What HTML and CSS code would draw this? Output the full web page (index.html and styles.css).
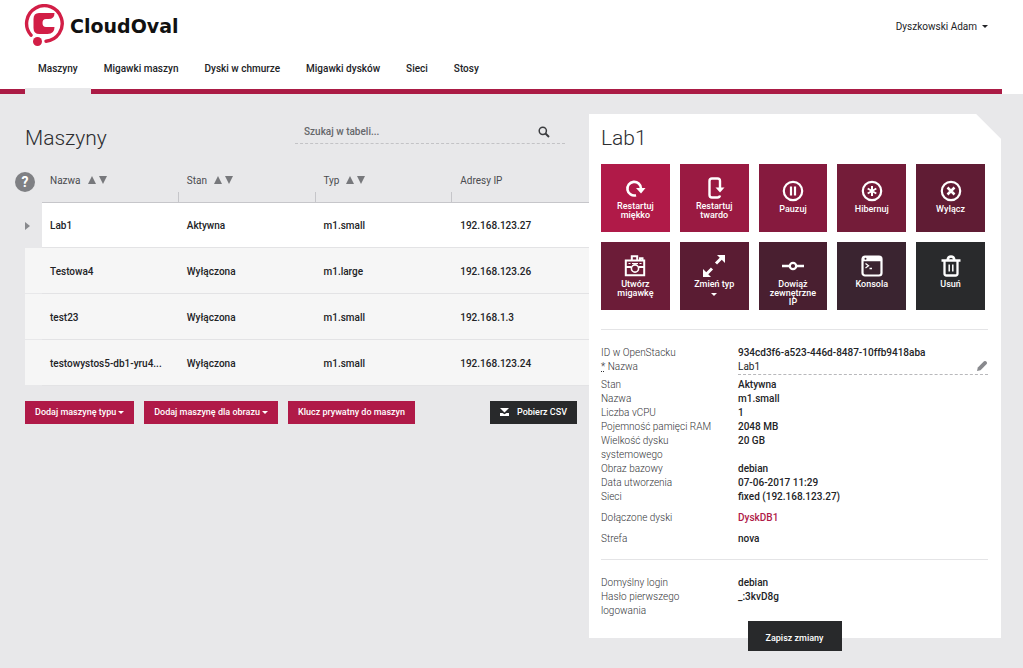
FILE: index.html
```html
<!DOCTYPE html>
<html lang="pl">
<head>
<meta charset="utf-8">
<meta name="viewport" content="width=device-width, initial-scale=1">
<title>CloudOval – Maszyny</title>
<link rel="stylesheet" href="styles.css">
</head>
<body>
<header class="site-header">
  <div class="top">
    <a class="brand" href="#">
      <svg class="brand-mark" viewBox="0 0 40 43" aria-hidden="true">
        <path d="M7 31.200A17.800 17.800 0 1 1 22 37.200" fill="none" stroke="#d21e46" stroke-width="3.400" stroke-linecap="round"/>
        <path d="M15 9H30.500q0 6-6 6H22q-3.500 0-3.500 4t3.500 4h8.500q0 7-7 7H15.500q-6 0-6-6V15q0-6 5.500-6z" fill="#d21e46"/>
        <circle cx="13.500" cy="37.500" r="4.500" fill="#d21e46"/>
      </svg>
      <span>CloudOval</span>
    </a>
    <button class="user" type="button">Dyszkowski Adam <i class="caret"></i></button>
  </div>
  <nav class="nav">
    <a class="active" href="#">Maszyny</a>
    <a href="#">Migawki maszyn</a>
    <a href="#">Dyski w chmurze</a>
    <a href="#">Migawki dysków</a>
    <a href="#">Sieci</a>
    <a href="#">Stosy</a>
  </nav>
</header>

<main class="layout">
  <section class="list">
    <div class="list-head">
      <h1>Maszyny</h1>
      <form class="search">
        <input type="search" placeholder="Szukaj w tabeli..." aria-label="Szukaj w tabeli">
        <button type="submit" aria-label="Szukaj"><svg viewBox="0 0 12 12"><circle cx="4.800" cy="4.800" r="3.600" fill="none" stroke="#3c3d40" stroke-width="1.500"/><path d="M7.500 7.500l3.500 3.500" stroke="#3c3d40" stroke-width="2"/></svg></button>
      </form>
    </div>
    <div class="table-wrap">
      <button class="help" type="button" aria-label="Pomoc">?</button>
      <table class="machines">
        <thead>
          <tr>
            <th class="mark"></th>
            <th><span>Nazwa</span><button class="sort" type="button" aria-label="Sortuj po nazwie"><svg viewBox="0 0 19 8"><path d="M4 0l4 8H0zM11 0h8l-4 8z"/></svg></button></th>
            <th><span>Stan</span><button class="sort" type="button" aria-label="Sortuj po stanie"><svg viewBox="0 0 19 8"><path d="M4 0l4 8H0zM11 0h8l-4 8z"/></svg></button></th>
            <th><span>Typ</span><button class="sort" type="button" aria-label="Sortuj po typie"><svg viewBox="0 0 19 8"><path d="M4 0l4 8H0zM11 0h8l-4 8z"/></svg></button></th>
            <th><span>Adresy IP</span></th>
          </tr>
        </thead>
        <tbody>
          <tr class="selected"><td class="mark"><svg viewBox="0 0 5 8"><path d="M0 0l5 4-5 4z"/></svg></td><td>Lab1</td><td>Aktywna</td><td>m1.small</td><td>192.168.123.27</td></tr>
          <tr><td class="mark"></td><td>Testowa4</td><td>Wyłączona</td><td>m1.large</td><td>192.168.123.26</td></tr>
          <tr><td class="mark"></td><td>test23</td><td>Wyłączona</td><td>m1.small</td><td>192.168.1.3</td></tr>
          <tr><td class="mark"></td><td>testowystos5-db1-yru4...</td><td>Wyłączona</td><td>m1.small</td><td>192.168.123.24</td></tr>
        </tbody>
      </table>
    </div>
    <div class="buttons">
      <button class="btn" type="button">Dodaj maszynę typu <i class="caret"></i></button>
      <button class="btn" type="button">Dodaj maszynę dla obrazu <i class="caret"></i></button>
      <button class="btn" type="button">Klucz prywatny do maszyn</button>
      <button class="btn dark csv" type="button"><svg viewBox="0 0 9 8"><path d="M0 0h9L4.500 4.500zM0 5h2.500l2 1.200L6.500 5H9v3H0z" fill="#fff"/></svg>Pobierz CSV</button>
    </div>
  </section>

  <section class="panel">
    <h2>Lab1</h2>
    <div class="tiles">
      <button class="tile t1" type="button"><svg viewBox="0 0 24 24"><path d="M13 19.200A6.800 6.800 0 1 1 18 12.500" fill="none" stroke="#fff" stroke-width="2.600"/><path d="M13 12h9.500L18 17.500z" fill="#fff"/></svg>Restartuj miękko</button>
      <button class="tile t2" type="button"><svg viewBox="0 0 24 24"><path d="M18 12V5q0-2.500-2.500-2.500H10Q7.500 2.500 7.500 5v14q0 2.500 2.500 2.500h5.500q2 0 2.500-2" fill="none" stroke="#fff" stroke-width="2.400"/><path d="M13.500 11.500H22.500L18 16.500z" fill="#fff"/></svg>Restartuj twardo</button>
      <button class="tile t3 low" type="button"><svg viewBox="0 0 24 24"><circle cx="12" cy="12" r="9.200" fill="none" stroke="#fff" stroke-width="2.200"/><path d="M10 7.500v9M14 7.500v9" stroke="#fff" stroke-width="2.200"/></svg>Pauzuj</button>
      <button class="tile t4 low" type="button"><svg viewBox="0 0 24 24"><circle cx="12" cy="12" r="9.200" fill="none" stroke="#fff" stroke-width="2.200"/><path d="M12 7v10M7.700 9.500l8.600 5M16.300 9.500l-8.600 5" stroke="#fff" stroke-width="2"/></svg>Hibernuj</button>
      <button class="tile t5 low" type="button"><svg viewBox="0 0 24 24"><circle cx="12" cy="12" r="9.200" fill="none" stroke="#fff" stroke-width="2.200"/><path d="M8.500 8.500l7 7M15.500 8.500l-7 7" stroke="#fff" stroke-width="2.500"/></svg>Wyłącz</button>
      <button class="tile t6" type="button"><svg viewBox="0 0 24 24"><path d="M2.800 6.500h18.400v14.700H2.800zM8.800 6.500V2.300h5.400v4.200M3 13h5.500M15.500 13H21M17 6V4.300h2.500V6" fill="none" stroke="#fff" stroke-width="2"/><circle cx="12" cy="14.500" r="3.600" fill="none" stroke="#fff" stroke-width="1.600"/><path d="M5.500 9.500h2M9 9.500h6M16.500 9.500h2" stroke="#fff" stroke-width="1.200"/></svg>Utwórz migawkę</button>
      <button class="tile t7" type="button"><svg viewBox="0 0 24 24"><path d="M14 9.500l6-6M10 14.500l-6 6" stroke="#fff" stroke-width="3"/><path d="M15 1h8v8zM1 15v8h8z" fill="#fff"/></svg>Zmień typ<i class="caret"></i></button>
      <button class="tile t8" type="button"><svg viewBox="0 0 24 24"><circle cx="12" cy="12" r="3.200" fill="none" stroke="#fff" stroke-width="2.200"/><path d="M1 12h8M15 12h8" stroke="#fff" stroke-width="2.400"/></svg>Dowiąż zewnętrzne IP</button>
      <button class="tile t9" type="button"><svg viewBox="0 0 24 24"><rect x="2.500" y="2.500" width="19" height="19" rx="2.500" fill="none" stroke="#fff" stroke-width="2.200"/><path d="M2.500 5h19" stroke="#fff" stroke-width="4.500"/><path d="M5.500 9.500l3 2.200-3 2.200M9.500 14.500h2.500" fill="none" stroke="#fff" stroke-width="1.300"/><circle cx="5.500" cy="4.800" r="1" fill="#3a2430"/></svg>Konsola</button>
      <button class="tile t10" type="button"><svg viewBox="0 0 24 24"><path d="M2.500 6.500h19M5.500 6.500v13q0 2 2 2h9q2 0 2-2v-13M8.500 6Q9 2.500 12 2.500T15.500 6" fill="none" stroke="#fff" stroke-width="2.300"/><path d="M10.200 10.500v7M13.800 10.500v7" stroke="#fff" stroke-width="1.500"/></svg>Usuń</button>
    </div>
    <form class="details">
      <dl>
        <dt>ID w OpenStacku</dt><dd>934cd3f6-a523-446d-8487-10ffb9418aba</dd>
        <dt><label for="name"><abbr title="wymagane">*</abbr> Nazwa</label></dt>
        <dd class="edit"><input id="name" type="text" value="Lab1"><svg viewBox="0 0 12 12"><path d="M1 11l.8-3.500L8 1.300q1-.8 2 0l.7.700q.8 1 0 2L4.500 10.200z"/></svg></dd>
        <dt>Stan</dt><dd>Aktywna</dd>
        <dt>Nazwa</dt><dd>m1.small</dd>
        <dt>Liczba vCPU</dt><dd>1</dd>
        <dt>Pojemność pamięci RAM</dt><dd>2048 MB</dd>
        <dt>Wielkość dysku systemowego</dt><dd>20 GB</dd>
        <dt>Obraz bazowy</dt><dd>debian</dd>
        <dt>Data utworzenia</dt><dd>07-06-2017 11:29</dd>
        <dt>Sieci</dt><dd>fixed (192.168.123.27)</dd>
        <dt class="spaced">Dołączone dyski</dt><dd class="spaced"><a href="#">DyskDB1</a></dd>
        <dt class="spaced">Strefa</dt><dd class="spaced">nova</dd>
      </dl>
      <dl>
        <dt>Domyślny login</dt><dd>debian</dd>
        <dt>Hasło pierwszego logowania</dt><dd>_:3kvD8g</dd>
      </dl>
      <button class="save" type="submit">Zapisz zmiany</button>
    </form>
  </section>
</main>
</body>
</html>
```
FILE: styles.css
```css
* { box-sizing: border-box; }
body {
  margin: 0;
  background: #e8e8ea;
  color: #222326;
  font: 500 10px/14px Roboto, "Noto Sans", sans-serif;
}
button, input { font: inherit; color: inherit; border: 0; padding: 0; background: none; border-radius: 0; }
button { cursor: pointer; }
a { color: inherit; text-decoration: none; }
h1, h2, dl, dd { margin: 0; }
h1, h2 { font-size: 21px; line-height: 28px; font-weight: 300; color: #2c2d30; }
svg { display: block; }
.caret {
  display: inline-block;
  border: 3px solid transparent;
  border-top-color: currentColor;
  border-bottom: 0;
  vertical-align: middle;
}

.site-header { background: #fff; }
.top { display: flex; justify-content: space-between; align-items: center; height: 51px; padding: 0 35px 0 24px; }
.brand { display: flex; align-items: center; gap: 6px; font: bold 19px/24px "DejaVu Sans", sans-serif; color: #111; }
.brand-mark { width: 40px; height: 43px; }
.user { display: flex; align-items: center; gap: 5px; padding-top: 2px; font-weight: 400; }
.nav { display: flex; margin-right: 21px; padding-left: 25px; border-bottom: 5px solid #ab1b45; }
.nav a { padding: 10px 13px 13px; line-height: 15px; }
.nav .active { padding-bottom: 12px; border-bottom: 6px solid #e8e8ea; margin-bottom: -5px; }

.layout { display: grid; grid-template-columns: 564fr 412fr; align-items: start; padding: 20px 22px 13px 25px; }
.list-head { display: flex; justify-content: space-between; padding: 9px 24px 0 0; height: 50px; }
.list-head h1 { padding-top: 1px; }
.search { display: flex; align-items: center; width: 50%; height: 21px; padding: 0 15px 3px 9px; border-bottom: 1px dashed #c3c3c6; }
.search input { flex: 1; min-width: 0; outline: 0; appearance: none; }
.search input::placeholder { color: #66676b; opacity: 1; }
.search svg { width: 12px; height: 12px; }
.table-wrap { position: relative; }
.help {
  position: absolute; left: -10px; top: 8px;
  width: 20px; height: 20px; border-radius: 50%;
  background: #7f8084; color: #fff; font-size: 14px; font-weight: 700; line-height: 20px;
}
.machines { width: 100%; table-layout: fixed; border-collapse: collapse; }
.machines th, .machines td { padding: 0 8px; text-align: left; }
.machines th { position: relative; height: 38px; padding-bottom: 4px; border-bottom: 1px solid #c6c6ca; font-weight: 400; color: #4a4b4f; }
.machines th + th + th::before { content: ""; position: absolute; left: -1px; bottom: 0; height: 10px; border-left: 1px solid #c6c6ca; }
.machines .mark { width: 17px; padding: 0; border-bottom-color: #e8e8ea; }
.sort { margin-left: 7px; }
.sort svg { width: 19px; height: 8px; fill: #77787c; }
.machines td { height: 46px; padding-top: 3px; background: #f6f6f6; border-bottom: 1px solid #e3e3e5; white-space: nowrap; }
.machines .selected td { height: 45px; padding-top: 2px; background: #fff; }
.machines .selected .mark { background: #e8e8ea; }
.mark svg { width: 5px; height: 8px; fill: #88898d; }
.buttons { display: flex; gap: 10px; padding: 15px 12px 0 0; }
.btn { display: flex; align-items: center; gap: 2px; height: 23px; padding: 0 10px; background: #b01a48; color: #fff; font-size: 9px; white-space: nowrap; }
.btn.dark { background: #28292b; }
.csv { margin-left: auto; gap: 8px; }
.csv svg { width: 9px; height: 8px; }

.panel { background: linear-gradient(225deg, transparent 17px, #fff 18px); padding: 10px 13px 0 12px; }
.tiles { display: grid; grid-template-columns: repeat(5, 1fr); gap: 10px; margin: 12px 3px 0 0; }
.tile { display: flex; flex-direction: column; align-items: center; height: 68px; padding: 12px 8px 0; color: #fff; font-size: 9px; line-height: 9px; }
.tile svg { width: 24px; height: 24px; flex: none; margin-bottom: 2px; }
.tile.low { padding-top: 15px; }
.tile .caret { margin-top: 4px; }
.t1 { background: #b01a48; }
.t2 { background: #9a1a42; }
.t3 { background: #861a3e; }
.t4 { background: #741c39; }
.t5 { background: #601c34; }
.t6 { background: #6c1c38; }
.t7 { background: #5a1c33; }
.t8 { background: #491f30; }
.t9 { background: #3a2430; }
.t10 { background: #292a2c; }
.details dl { display: grid; grid-template-columns: 137fr 250fr; padding: 16px 0 13px; border-top: 1px solid #e4e4e6; }
.details { margin-top: 19px; }
.details dt { padding-right: 25px; font-weight: 300; color: #333438; }
.details .spaced { padding-top: 7px; }
.details .edit { display: flex; justify-content: space-between; height: 15px; margin-bottom: 3px; border-bottom: 1px dashed #b8b8bb; }
.edit input { flex: 1; min-width: 0; height: 14px; font-weight: 400; outline: 0; }
.edit svg { width: 12px; height: 12px; fill: #88898d; }
.details a { color: #b01a48; }
.save { display: block; width: 94px; height: 34px; margin: -10px auto -17px; background: #28292b; color: #fff; font-size: 9px; }
```
